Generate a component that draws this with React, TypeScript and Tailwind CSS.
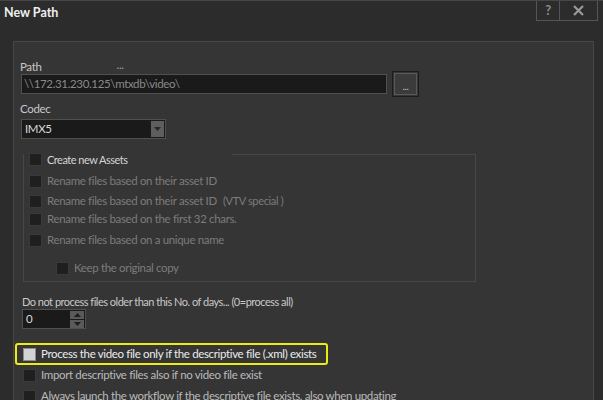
import React from 'react'

const Check = ({ light = false }: { light?: boolean }) => (
  <span
    className={
      light
        ? 'inline-block w-[13px] h-[13px] shrink-0 border border-[#8c8c8c] bg-[#d4d4d4]'
        : 'inline-block w-[13px] h-[13px] shrink-0 border border-[#3a3a3a] bg-[#1f1f1f]'
    }
  />
)

const Row = ({ text, className, children }: { text: string; className: string; children?: React.ReactNode }) => (
  <div className={`flex items-center h-[14px] ${className}`}>
    <Check />
    <span className="ml-[5px] whitespace-nowrap leading-[14px]">{text}</span>
    {children}
  </div>
)

export default function App() {
  return (
    <div className="w-[603px] h-[400px] overflow-hidden bg-[#2c2c2c] border-t border-[#464646] font-['Lato','Noto_Sans',sans-serif] text-[11.5px] tracking-[-0.35px] text-[#c8c8c8]">
      {/* title bar */}
      <div className="flex justify-between h-[20px]">
        <div className="pl-[4px] pt-[5px] font-bold text-[12.5px] tracking-normal leading-[14px] text-[#f0f0f0]">New Path</div>
        <div className="flex mr-[5px] h-[20px] border border-t-0 border-[#555555]">
          <div className="w-[22px] flex items-center justify-center text-[#8a8a8a] text-[13px] font-bold">?</div>
          <div className="w-[38px] flex items-center justify-center border-l border-[#555555]">
            <svg width="11" height="11" viewBox="0 0 11 11">
              <path d="M1 1 L10 10 M10 1 L1 10" stroke="#9a9a9a" strokeWidth="2.2" />
            </svg>
          </div>
        </div>
      </div>

      {/* panel */}
      <div className="ml-[13px] mt-[20px] w-[581px] h-[380px] border border-[#474747] bg-[#353535] pl-[6px]">
        <div className="flex h-[11px] mt-[18px] leading-[13px]">
          <span>Path</span>
          <span className="ml-[75px] text-[#a0a0a0] leading-[10px]">...</span>
        </div>
        <div className="flex items-center h-[26px]">
          <div className="w-[366px] h-[20px] ml-px bg-[#1a1a1a] border border-[#505050] pl-[2px] text-[#8a8a8a] leading-[18px]">
            \\172.31.230.125\mtxdb\video\
          </div>
          <div className="ml-[5px] w-[27px] h-[26px] border border-[#1c1c1c] p-px">
            <div className="w-full h-full border border-[#5a5a5a] bg-[#3b3b3b] flex items-center justify-center text-[#c0c0c0] text-[10px] leading-none pt-[3px]">
              ...
            </div>
          </div>
        </div>

        <div className="mt-[5px] h-[14px] leading-[14px]">Codec</div>
        <div className="mt-[3px] ml-px w-[145px] h-[20px] bg-[#1a1a1a] border border-[#505050] flex items-center justify-between">
          <span className="pl-[3px] text-[#d8d8d8]">IMX5</span>
          <span className="mr-[1px] w-[13px] h-[16px] bg-[#5e5e5e] flex items-center justify-center">
            <svg width="7" height="4" viewBox="0 0 7 4">
              <path d="M0 0 H7 L3.5 4 Z" fill="#262626" />
            </svg>
          </span>
        </div>

        {/* group box */}
        <div className="mt-[15px] ml-[3px] w-[453px] h-[128px] border border-[#474747]">
          <div className="relative -mt-[2px] w-[208px] h-[13px] bg-[#353535] flex items-center pl-[5px]">
            <Check />
            <span className="ml-[5px] text-[#d4d4d4] text-[11px] tracking-[-0.5px] leading-[14px]">Create new Assets</span>
          </div>
          <div className="pl-[5px] text-[#7c7c7c]">
            <Row text="Rename files based on their asset ID" className="mt-[8px]" />
            <Row text="Rename files based on their asset ID" className="mt-[6px]">
              <span className="ml-[6px] text-[11px]">(VTV special )</span>
            </Row>
            <Row text="Rename files based on the first 32 chars." className="mt-[4px]" />
            <Row text="Rename files based on a unique name" className="mt-[7px]" />
            <Row text="Keep the original copy" className="mt-[14px] ml-[27px]" />
          </div>
        </div>

        <div className="mt-[13px] ml-[2px] h-[14px] leading-[14px] text-[11px] tracking-[-0.5px]">Do not process files older than this No. of days... (0=process all)</div>
        <div className="ml-[2px] w-[64px] h-[20px] bg-[#1a1a1a] border border-[#505050] flex items-center justify-between">
          <span className="pl-[3px] text-[#d8d8d8]">0</span>
          <div className="mr-[1px] flex flex-col gap-px">
            <span className="w-[14px] h-[8px] bg-[#5a5a5a] flex items-center justify-center">
              <svg width="7" height="4" viewBox="0 0 7 4"><path d="M0 4 H7 L3.5 0 Z" fill="#1e1e1e" /></svg>
            </span>
            <span className="w-[14px] h-[8px] bg-[#5a5a5a] flex items-center justify-center">
              <svg width="7" height="4" viewBox="0 0 7 4"><path d="M0 0 H7 L3.5 4 Z" fill="#1e1e1e" /></svg>
            </span>
          </div>
        </div>

        <div className="mt-[14px] -ml-[5px] w-[313px] h-[22px] border-2 border-[#ecec10] rounded-[3px] flex items-center pl-[6px]">
          <Check light />
          <span className="ml-[5px] text-[#ececec] whitespace-nowrap">Process the video file only if the descriptive file (.xml) exists</span>
        </div>
        <div className="pl-[3px] text-[#bababa]">
          <Row text="Import descriptive files also if no video file exist" className="mt-[3px]" />
          <Row text="Always launch the workflow if the descriptive file exists, also when updating" className="mt-[7px]" />
        </div>
      </div>
    </div>
  )
}
